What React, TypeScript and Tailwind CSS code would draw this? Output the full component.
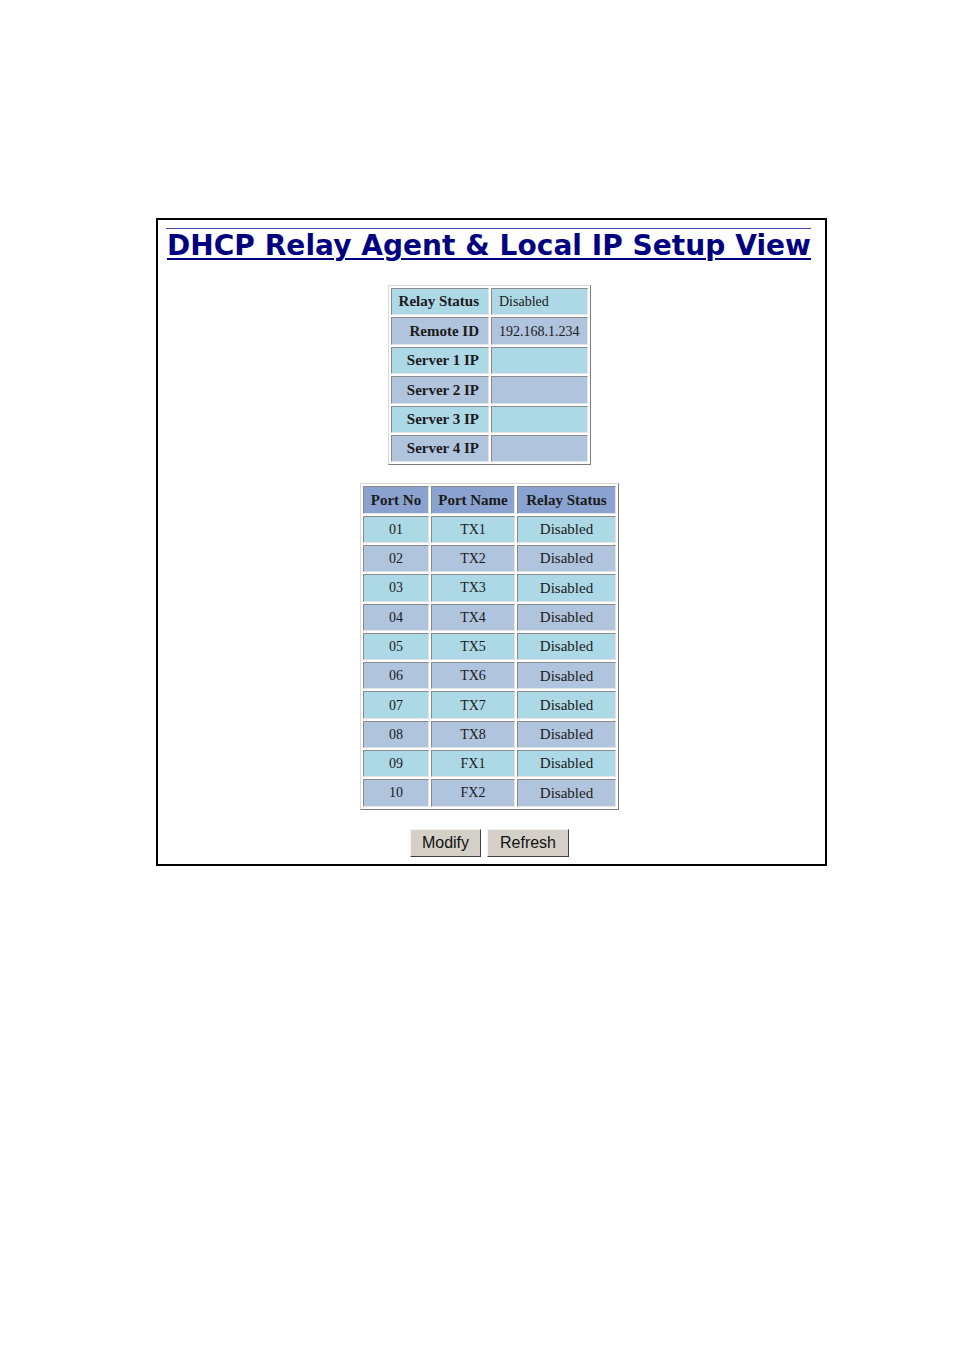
const ROWS1: { label: string; value: string }[] = [
  { label: 'Relay Status', value: 'Disabled' },
  { label: 'Remote ID', value: '192.168.1.234' },
  { label: 'Server 1 IP', value: '' },
  { label: 'Server 2 IP', value: '' },
  { label: 'Server 3 IP', value: '' },
  { label: 'Server 4 IP', value: '' },
];

const PORTS = [
  ['01', 'TX1'],
  ['02', 'TX2'],
  ['03', 'TX3'],
  ['04', 'TX4'],
  ['05', 'TX5'],
  ['06', 'TX6'],
  ['07', 'TX7'],
  ['08', 'TX8'],
  ['09', 'FX1'],
  ['10', 'FX2'],
];

const cell =
  'p-0 border border-t-[#8a8a8a] border-l-[#8a8a8a] border-b-[#e4e4e4] border-r-[#e4e4e4]';

export default function App() {
  return (
    <div className="min-h-[1351px] w-[954px] bg-white pt-[218px] pl-[156px]">
      <div className="w-[671px] h-[648px] border-2 border-black pt-[8px] pl-[8px] pr-[12px] flex flex-col items-center">
        <div className="self-start w-[645px] h-px bg-[#4a4ab0]" />
        <h1
          className="self-start w-[646px] mt-[1px] pl-[1px] text-[28px] leading-[32px] font-bold text-[#000080] underline underline-offset-[3px] decoration-[2px] tracking-[0.05px] whitespace-nowrap"
          style={{ fontFamily: '"DejaVu Sans", Verdana, sans-serif' }}
        >
          DHCP Relay Agent &amp; Local IP Setup View
        </h1>

        <table
          className="mt-[23px] border-separate border-spacing-[2px] border border-t-[#d8d8d8] border-l-[#d8d8d8] border-b-[#7a7a7a] border-r-[#7a7a7a] text-[15px] text-[#1a1a1a]"
          style={{ fontFamily: '"Liberation Serif", "Times New Roman", serif' }}
        >
          <tbody>
            {ROWS1.map((r, i) => (
              <tr key={r.label} className={i % 2 === 0 ? 'bg-[#add8e6]' : 'bg-[#b0c4de]'}>
                <td className={`${cell} h-[27.4px] w-[98px] text-right font-bold pr-[9px] whitespace-nowrap`}>
                  {r.label}
                </td>
                <td className={`${cell} h-[27.4px] w-[97px] text-left pl-[7px] text-[14px] whitespace-nowrap`}>
                  {r.value}
                </td>
              </tr>
            ))}
          </tbody>
        </table>

        <table
          className="mt-[18px] border-separate border-spacing-[2px] border border-t-[#d8d8d8] border-l-[#d8d8d8] border-b-[#7a7a7a] border-r-[#7a7a7a] text-[15px] text-[#1a1a1a] text-center"
          style={{ fontFamily: '"Liberation Serif", "Times New Roman", serif' }}
        >
          <thead>
            <tr className="bg-[#8aa2cf]">
              <th className={`${cell} h-[27.3px] w-[66px] font-bold whitespace-nowrap`}>Port No</th>
              <th className={`${cell} h-[27.3px] w-[84px] font-bold whitespace-nowrap`}>Port Name</th>
              <th className={`${cell} h-[27.3px] w-[99px] font-bold whitespace-nowrap`}>Relay Status</th>
            </tr>
          </thead>
          <tbody>
            {PORTS.map(([no, name], i) => (
              <tr key={no} className={i % 2 === 0 ? 'bg-[#add8e6]' : 'bg-[#b0c4de]'}>
                <td className={`${cell} h-[27.3px] text-[14px]`}>{no}</td>
                <td className={`${cell} h-[27.3px] text-[14px]`}>{name}</td>
                <td className={`${cell} h-[27.3px]`}>Disabled</td>
              </tr>
            ))}
          </tbody>
        </table>

        <div
          className="mt-[19px] flex gap-[6px] text-[16px] text-[#111]"
          style={{ fontFamily: '"Liberation Sans", Arial, sans-serif' }}
        >
          <button className="w-[71px] h-[28px] bg-[#d4d0c8] border border-t-[#f4f4f4] border-l-[#f4f4f4] border-b-[#404040] border-r-[#404040]">
            Modify
          </button>
          <button className="w-[82px] h-[28px] bg-[#d4d0c8] border border-t-[#f4f4f4] border-l-[#f4f4f4] border-b-[#404040] border-r-[#404040]">
            Refresh
          </button>
        </div>
      </div>
    </div>
  );
}
